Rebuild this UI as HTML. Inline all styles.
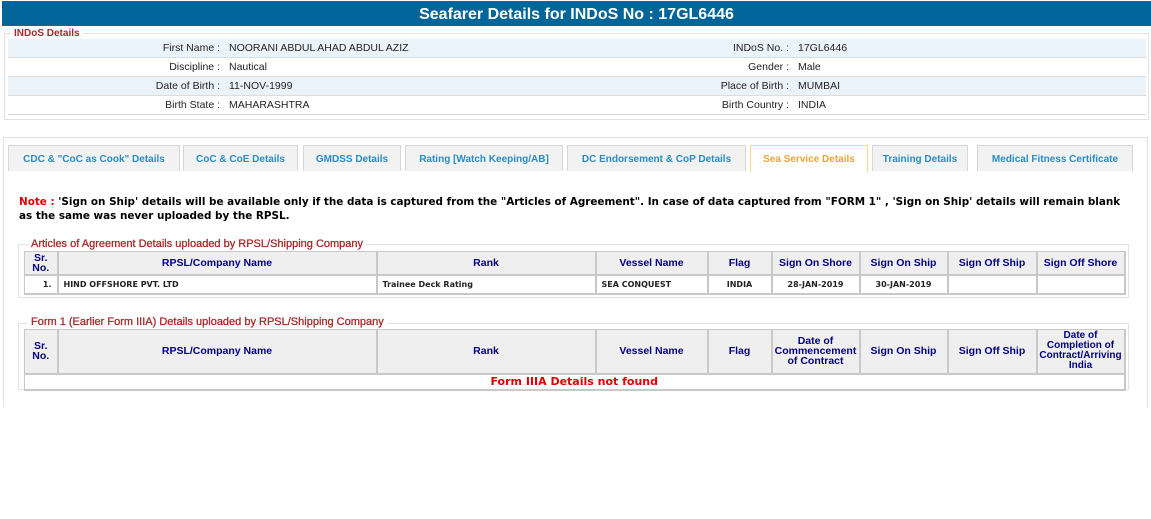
<!DOCTYPE html>
<html><head><meta charset="utf-8"><style>
*{margin:0;padding:0;box-sizing:border-box}
body{width:1151px;height:519px;background:#fff;position:relative;overflow:hidden;font-family:"Liberation Sans",Arial,sans-serif}
.a{position:absolute}
.hdr{left:2px;top:1px;width:1149px;height:25px;background:#006699;color:#fff;font:bold 16px "Liberation Sans",sans-serif;text-align:center;line-height:27px}
.fs{border:1px solid #e2e2e2;position:absolute}
.lg{position:absolute;background:#fff;padding:0 3px;color:#a52a2a;font-size:11px;line-height:12px;-webkit-text-stroke:0.3px #a52a2a}
.row{position:absolute;left:8px;width:1138px;height:19px;border-bottom:1px solid #dcdcdc;font-size:10.5px;color:#222;line-height:19px}
.row.b{background:#eaf2fa}
.row span{position:absolute}
.l1{right:926px;text-align:right}
.v1{left:221px}
.l2{right:357px;text-align:right}
.v2{left:790px}
.tab{position:absolute;top:145px;height:26px;border:1px solid #d6d6d6;border-bottom:none;background:#f2f2f2;color:#2a8cc4;font-weight:bold;font-size:10px;text-align:center;line-height:27px}
.tab.on{background:#fff;color:#e8a33c;border-color:#f5d98a;height:27px}
.note{left:19px;top:195px;width:1115px;font:bold 10.4px "DejaVu Sans",Verdana,sans-serif;line-height:14px;color:#000}
table{position:absolute;border-collapse:collapse;table-layout:fixed;left:24px;width:1100px}
td,th{border:1px solid #c8c8c8;border-width:1px 2px 2px 1px}
th{background:#efefef;color:#000080;font:bold 10.5px "Liberation Sans",Tahoma,sans-serif;line-height:10px}
td{font:bold 8px "DejaVu Sans",Verdana,sans-serif;color:#222;padding:0 5px;height:19px}
</style></head><body>
<div class="a hdr">Seafarer Details for INDoS No : 17GL6446</div>

<div class="fs" style="left:4px;top:33px;width:1145px;height:87px"></div>
<div class="lg" style="left:11px;top:28px;font-weight:bold;font-size:10px;-webkit-text-stroke:0">INDoS Details</div>
<div class="row b" style="top:39px"><span class="l1">First Name :</span><span class="v1">NOORANI ABDUL AHAD ABDUL AZIZ</span><span class="l2">INDoS No. :</span><span class="v2">17GL6446</span></div>
<div class="row" style="top:58px"><span class="l1">Discipline :</span><span class="v1">Nautical</span><span class="l2">Gender :</span><span class="v2">Male</span></div>
<div class="row b" style="top:77px"><span class="l1">Date of Birth :</span><span class="v1">11-NOV-1999</span><span class="l2">Place of Birth :</span><span class="v2">MUMBAI</span></div>
<div class="row" style="top:96px"><span class="l1">Birth State :</span><span class="v1">MAHARASHTRA</span><span class="l2">Birth Country :</span><span class="v2">INDIA</span></div>

<div class="fs" style="left:3px;top:137px;width:1145px;height:270px;border-bottom:none"></div>
<div class="tab" style="left:8px;width:172px">CDC &amp; "CoC as Cook" Details</div>
<div class="tab" style="left:183px;width:115px">CoC &amp; CoE Details</div>
<div class="tab" style="left:303px;width:98px">GMDSS Details</div>
<div class="tab" style="left:405px;width:158px">Rating [Watch Keeping/AB]</div>
<div class="tab" style="left:567px;width:179px">DC Endorsement &amp; CoP Details</div>
<div class="tab on" style="left:750px;width:118px">Sea Service Details</div>
<div class="tab" style="left:872px;width:96px">Training Details</div>
<div class="tab" style="left:977px;width:156px">Medical Fitness Certificate</div>

<div class="a note"><span style="color:#e00000">Note :</span> 'Sign on Ship' details will be available only if the data is captured from the "Articles of Agreement". In case of data captured from "FORM 1" , 'Sign on Ship' details will remain blank as the same was never uploaded by the RPSL.</div>

<div class="fs" style="left:18px;top:244px;width:1111px;height:54px"></div>
<div class="lg" style="left:28px;top:238px">Articles of Agreement Details uploaded by RPSL/Shipping Company</div>
<table style="top:251px">
<colgroup><col style="width:33px"><col style="width:319px"><col style="width:219px"><col style="width:112px"><col style="width:64px"><col style="width:88px"><col style="width:88px"><col style="width:89px"><col style="width:88px"></colgroup>
<tr style="height:23px"><th>Sr.<br>No.</th><th>RPSL/Company Name</th><th>Rank</th><th>Vessel Name</th><th>Flag</th><th>Sign On Shore</th><th>Sign On Ship</th><th>Sign Off Ship</th><th>Sign Off Shore</th></tr>
<tr><td style="text-align:right">1.</td><td>HIND OFFSHORE PVT. LTD</td><td>Trainee Deck Rating</td><td>SEA CONQUEST</td><td style="text-align:center">INDIA</td><td style="text-align:center">28-JAN-2019</td><td style="text-align:center">30-JAN-2019</td><td></td><td></td></tr>
</table>

<div class="fs" style="left:18px;top:323px;width:1111px;height:67px"></div>
<div class="lg" style="left:28px;top:316px">Form 1 (Earlier Form IIIA) Details uploaded by RPSL/Shipping Company</div>
<table style="top:329px">
<colgroup><col style="width:33px"><col style="width:319px"><col style="width:219px"><col style="width:112px"><col style="width:64px"><col style="width:88px"><col style="width:88px"><col style="width:89px"><col style="width:88px"></colgroup>
<tr style="height:44px"><th>Sr.<br>No.</th><th>RPSL/Company Name</th><th>Rank</th><th>Vessel Name</th><th>Flag</th><th>Date of<br>Commencement<br>of Contract</th><th>Sign On Ship</th><th>Sign Off Ship</th><th style="line-height:10px;font-size:10px">Date of<br>Completion of<br>Contract/Arriving<br>India</th></tr>
<tr><td colspan="9" style="text-align:center;color:#e00000;font:bold 11px 'DejaVu Sans',Verdana,sans-serif;height:16px;line-height:14px">Form IIIA Details not found</td></tr>
</table>
</body></html>
